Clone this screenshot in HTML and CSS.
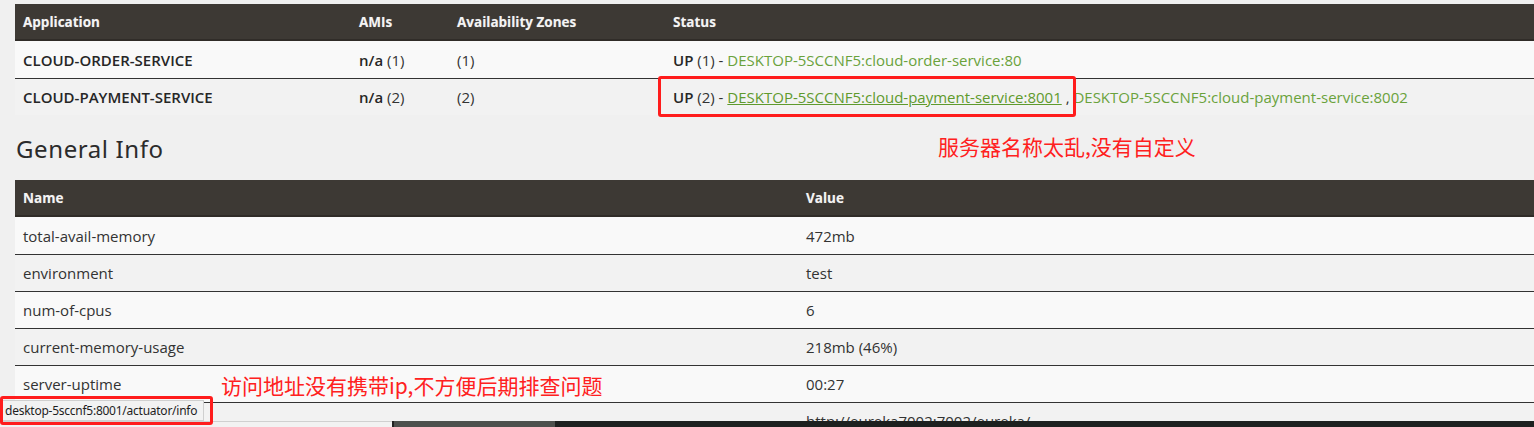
FILE: index.html
```html
<!DOCTYPE html>
<html>
<head>
<meta charset="utf-8">
<link rel="stylesheet" href="styles.css">
</head>
<body>
<div class="page">
  <table class="tbl apps">
    <colgroup><col class="c-app"><col class="c-ami"><col class="c-az"><col></colgroup>
    <thead>
      <tr><th>Application</th><th>AMIs</th><th>Availability Zones</th><th>Status</th></tr>
    </thead>
    <tbody>
      <tr class="odd">
        <td><b>CLOUD-ORDER-SERVICE</b></td>
        <td><b>n/a</b> (1)</td>
        <td>(1)</td>
        <td><b>UP</b> (1) - <a class="lnk">DESKTOP-5SCCNF5:cloud-order-service:80</a></td>
      </tr>
      <tr class="even">
        <td><b>CLOUD-PAYMENT-SERVICE</b></td>
        <td><b>n/a</b> (2)</td>
        <td>(2)</td>
        <td class="status"><b>UP</b> (2) - <a class="lnk hover">DESKTOP-5SCCNF5:cloud-payment-service:8001</a> , <a class="lnk">DESKTOP-5SCCNF5:cloud-payment-service:8002</a><span class="mark mark-status"></span></td>
      </tr>
    </tbody>
  </table>

  <div class="heading-row">
    <h1>General Info</h1>
    <span class="note note-1">服务器名称太乱,没有自定义</span>
  </div>

  <table class="tbl info">
    <colgroup><col class="c-name"><col></colgroup>
    <thead>
      <tr><th>Name</th><th>Value</th></tr>
    </thead>
    <tbody>
      <tr class="odd"><td>total-avail-memory</td><td>472mb</td></tr>
      <tr class="even"><td>environment</td><td>test</td></tr>
      <tr class="odd"><td>num-of-cpus</td><td>6</td></tr>
      <tr class="even"><td>current-memory-usage</td><td>218mb (46%)</td></tr>
      <tr class="odd"><td>server-uptime<span class="note note-2">访问地址没有携带ip,不方便后期排查问题</span></td><td>00:27</td></tr>
      <tr class="even"><td>registered-replicas</td><td>http://eureka7002:7002/eureka/</td></tr>
    </tbody>
  </table>
</div>

<div class="statusbar">desktop-5sccnf5:8001/actuator/info</div>
<div class="mark mark-bar"></div>
<div class="taskstrip">
  <div class="ts-light"></div>
  <div class="ts-mid"></div>
  <div class="ts-dark"></div>
</div>
</body>
</html>
```

FILE: styles.css
```css
html, body {
  margin: 0;
  padding: 0;
  background: #f0f0f0;
  height: 100%;
  overflow: hidden;
}
body {
  font-family: "Open Sans", "Noto Sans", sans-serif;
  font-size: 15px;
  color: #333;
}
.page {
  padding: 4px 0 0 15px;
}
.tbl {
  width: 100%;
  border-collapse: collapse;
  table-layout: fixed;
}
.tbl th {
  background: #3d3934;
  color: #f4f4f4;
  font-weight: 700;
  text-align: left;
  height: 35px;
  padding: 0 8px;
  border-bottom: 2px solid #302c28;
  text-shadow: 0 0 1px rgba(255,255,255,0.3);
  font-size: 13.5px;
}
.tbl td {
  height: 36px;
  padding: 0 8px;
  white-space: nowrap;
  vertical-align: middle;
  position: relative;
}
.tbl tbody tr + tr td {
  border-top: 1px solid #333;
}
.tbl tbody tr:first-child td { height: 37px; }
.odd td { background: #f9f9f9; }
.even td { background: #f2f2f2; }
.c-app { width: 336px; }
.c-ami { width: 98px; }
.c-az { width: 216px; }
.c-name { width: 783px; }
b { font-weight: 600; color: #262626; }
.lnk {
  color: #6aa23c;
  text-decoration: none;
}
.lnk.hover {
  color: #5f9a2d;
  text-decoration: underline;
}
.heading-row {
  height: 65px;
  position: relative;
}
h1 {
  margin: 0;
  padding-top: 18px;
  font-family: "Noto Sans", "Open Sans", sans-serif;
  font-weight: 400;
  font-size: 24px;
  letter-spacing: 0.6px;
  color: #2b2b2b;
  line-height: 32px;
  margin-left: 1px;
}
.note {
  position: absolute;
  color: #ff2020;
  font-family: "Noto Sans CJK SC", "Noto Sans", sans-serif;
  font-size: 21px;
  line-height: 26px;
  white-space: nowrap;
}
.note-1 {
  left: 923px;
  top: 18px;
}
.note-2 {
  left: 206px;
  top: 6px;
}
.mark {
  position: absolute;
  border: 3px solid #ff1c1c;
  border-radius: 3px;
  box-sizing: border-box;
  pointer-events: none;
}
.mark-status {
  left: -7px;
  top: -3px;
  width: 418px;
  height: 41px;
}
.statusbar {
  position: fixed;
  left: 0;
  top: 400px;
  height: 21px;
  box-sizing: border-box;
  background: #f2f2f2;
  border: 1px solid #cfcfcf;
  border-left: 0;
  font-family: "Noto Sans", "Open Sans", sans-serif;
  font-size: 12px;
  letter-spacing: -0.25px;
  line-height: 19px;
  padding: 0 6px 0 5px;
  white-space: nowrap;
  color: #1e1e1e;
  z-index: 3;
}
.mark-bar {
  position: fixed;
  left: 0;
  top: 396px;
  width: 213px;
  height: 29px;
  z-index: 5;
}
.taskstrip {
  position: fixed;
  left: 0;
  right: 0;
  top: 421px;
  height: 6px;
  display: flex;
  z-index: 2;
}
.ts-light {
  width: 392px;
  background: #f2f2f2;
  border-top: 1px solid #d0d0d0;
}
.ts-mid {
  width: 161px;
  background: #4d504d;
  border-left: 2px solid #222;
}
.ts-dark {
  flex: 1;
  background: #1d201f;
}
```
